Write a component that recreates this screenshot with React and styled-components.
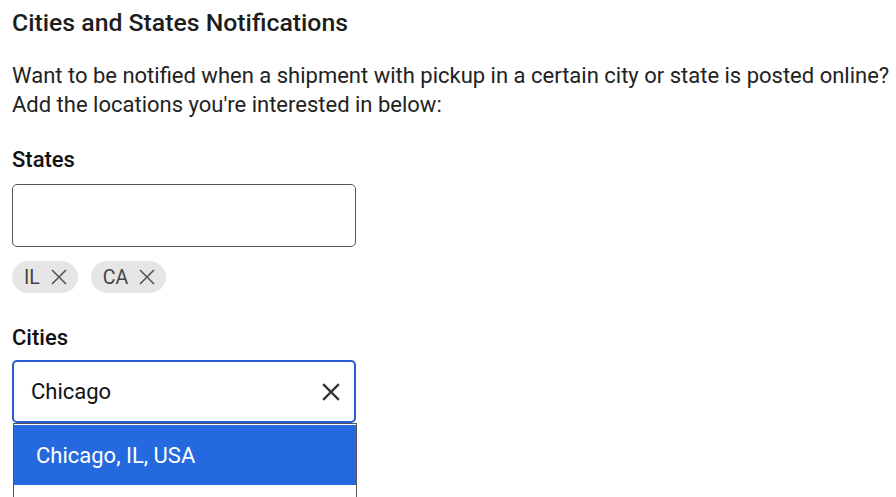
import React from "react";
import styled, { createGlobalStyle } from "styled-components";

const Global = createGlobalStyle`
  html, body { margin: 0; padding: 0; background: #ffffff; }
  body { font-family: Roboto, "Noto Sans", Arial, sans-serif; color: #212121; }
  * { box-sizing: border-box; }
`;

const Page = styled.div`
  padding: 8px 12px 0 12px;
  display: flex;
  flex-direction: column;
  width: 896px;
  height: 497px;
  overflow: hidden;
`;

const Title = styled.h2`
  margin: 0;
  font-size: 24.8px;
  line-height: 30px;
  font-weight: 500;
  color: #1d1d1d;
`;

const Intro = styled.p`
  margin: 23px 0 0 0;
  font-size: 22px;
  line-height: 29px;
  font-weight: 400;
  color: #222;
  white-space: nowrap;
`;

const Field = styled.div`
  display: flex;
  flex-direction: column;
  margin-top: ${(p) => p.$top}px;
`;

const Label = styled.label`
  font-size: 22px;
  line-height: 26px;
  font-weight: 500;
  color: #111;
`;

const InputBox = styled.div`
  position: relative;
  width: 344px;
  height: 63px;
  margin-top: ${(p) => p.$gap}px;
  border: ${(p) => (p.$focused ? "2px solid #2a5bd7" : "1px solid #555")};
  border-radius: 5px;
  display: flex;
  align-items: center;
  padding: 0 12px 0 ${(p) => (p.$focused ? 17 : 18)}px;
  background: #fff;
`;

const InputText = styled.span`
  flex: 1;
  font-size: 22px;
  color: #111;
`;

const ClearButton = styled.span`
  display: flex;
  align-items: center;
  justify-content: center;
  width: 20px;
  height: 20px;
  margin-right: 1px;
`;

const Chips = styled.div`
  display: flex;
  gap: 13px;
  margin-top: 14px;
`;

const Chip = styled.span`
  display: inline-flex;
  align-items: center;
  height: 32px;
  padding: 0 11px 0 12px;
  border-radius: 16px;
  background: #e6e6e6;
  font-size: 19.5px;
  color: #444;
  gap: 11px;
`;

const Dropdown = styled.div`
  position: absolute;
  left: -1px;
  top: 61px;
  width: 344px;
  height: 80px;
  border: 1px solid #555;
  border-bottom: none;
  background: #fff;
  padding-top: 1px;
`;

const Option = styled.div`
  height: 60px;
  display: flex;
  align-items: center;
  padding-left: 22px;
  font-size: 22px;
  color: #fff;
  background: ${(p) => (p.$active ? "#2469dd" : "#fff")};
`;

const Cross = ({ size = 16, stroke = "#555", width = 1.6 }) => (
  <svg width={size} height={size} viewBox="0 0 16 16" fill="none">
    <path d="M1 1L15 15M15 1L1 15" stroke={stroke} strokeWidth={width} strokeLinecap="butt" />
  </svg>
);

export default function App() {
  return (
    <>
      <Global />
      <Page>
        <Title>Cities and States Notifications</Title>
        <Intro>
          Want to be notified when a shipment with pickup in a certain city or state is posted online?
          <br />
          Add the locations you're interested in below:
        </Intro>
        <Field $top={28}>
          <Label>States</Label>
          <InputBox $gap={11} />
          <Chips>
            <Chip>
              IL <Cross size={16} />
            </Chip>
            <Chip>
              CA <Cross size={16} />
            </Chip>
          </Chips>
        </Field>
        <Field $top={32}>
          <Label>Cities</Label>
          <InputBox $gap={9} $focused>
            <InputText>Chicago</InputText>
            <ClearButton>
              <Cross size={18} stroke="#333" width={2} />
            </ClearButton>
            <Dropdown>
              <Option $active>Chicago, IL, USA</Option>
            </Dropdown>
          </InputBox>
        </Field>
      </Page>
    </>
  );
}
